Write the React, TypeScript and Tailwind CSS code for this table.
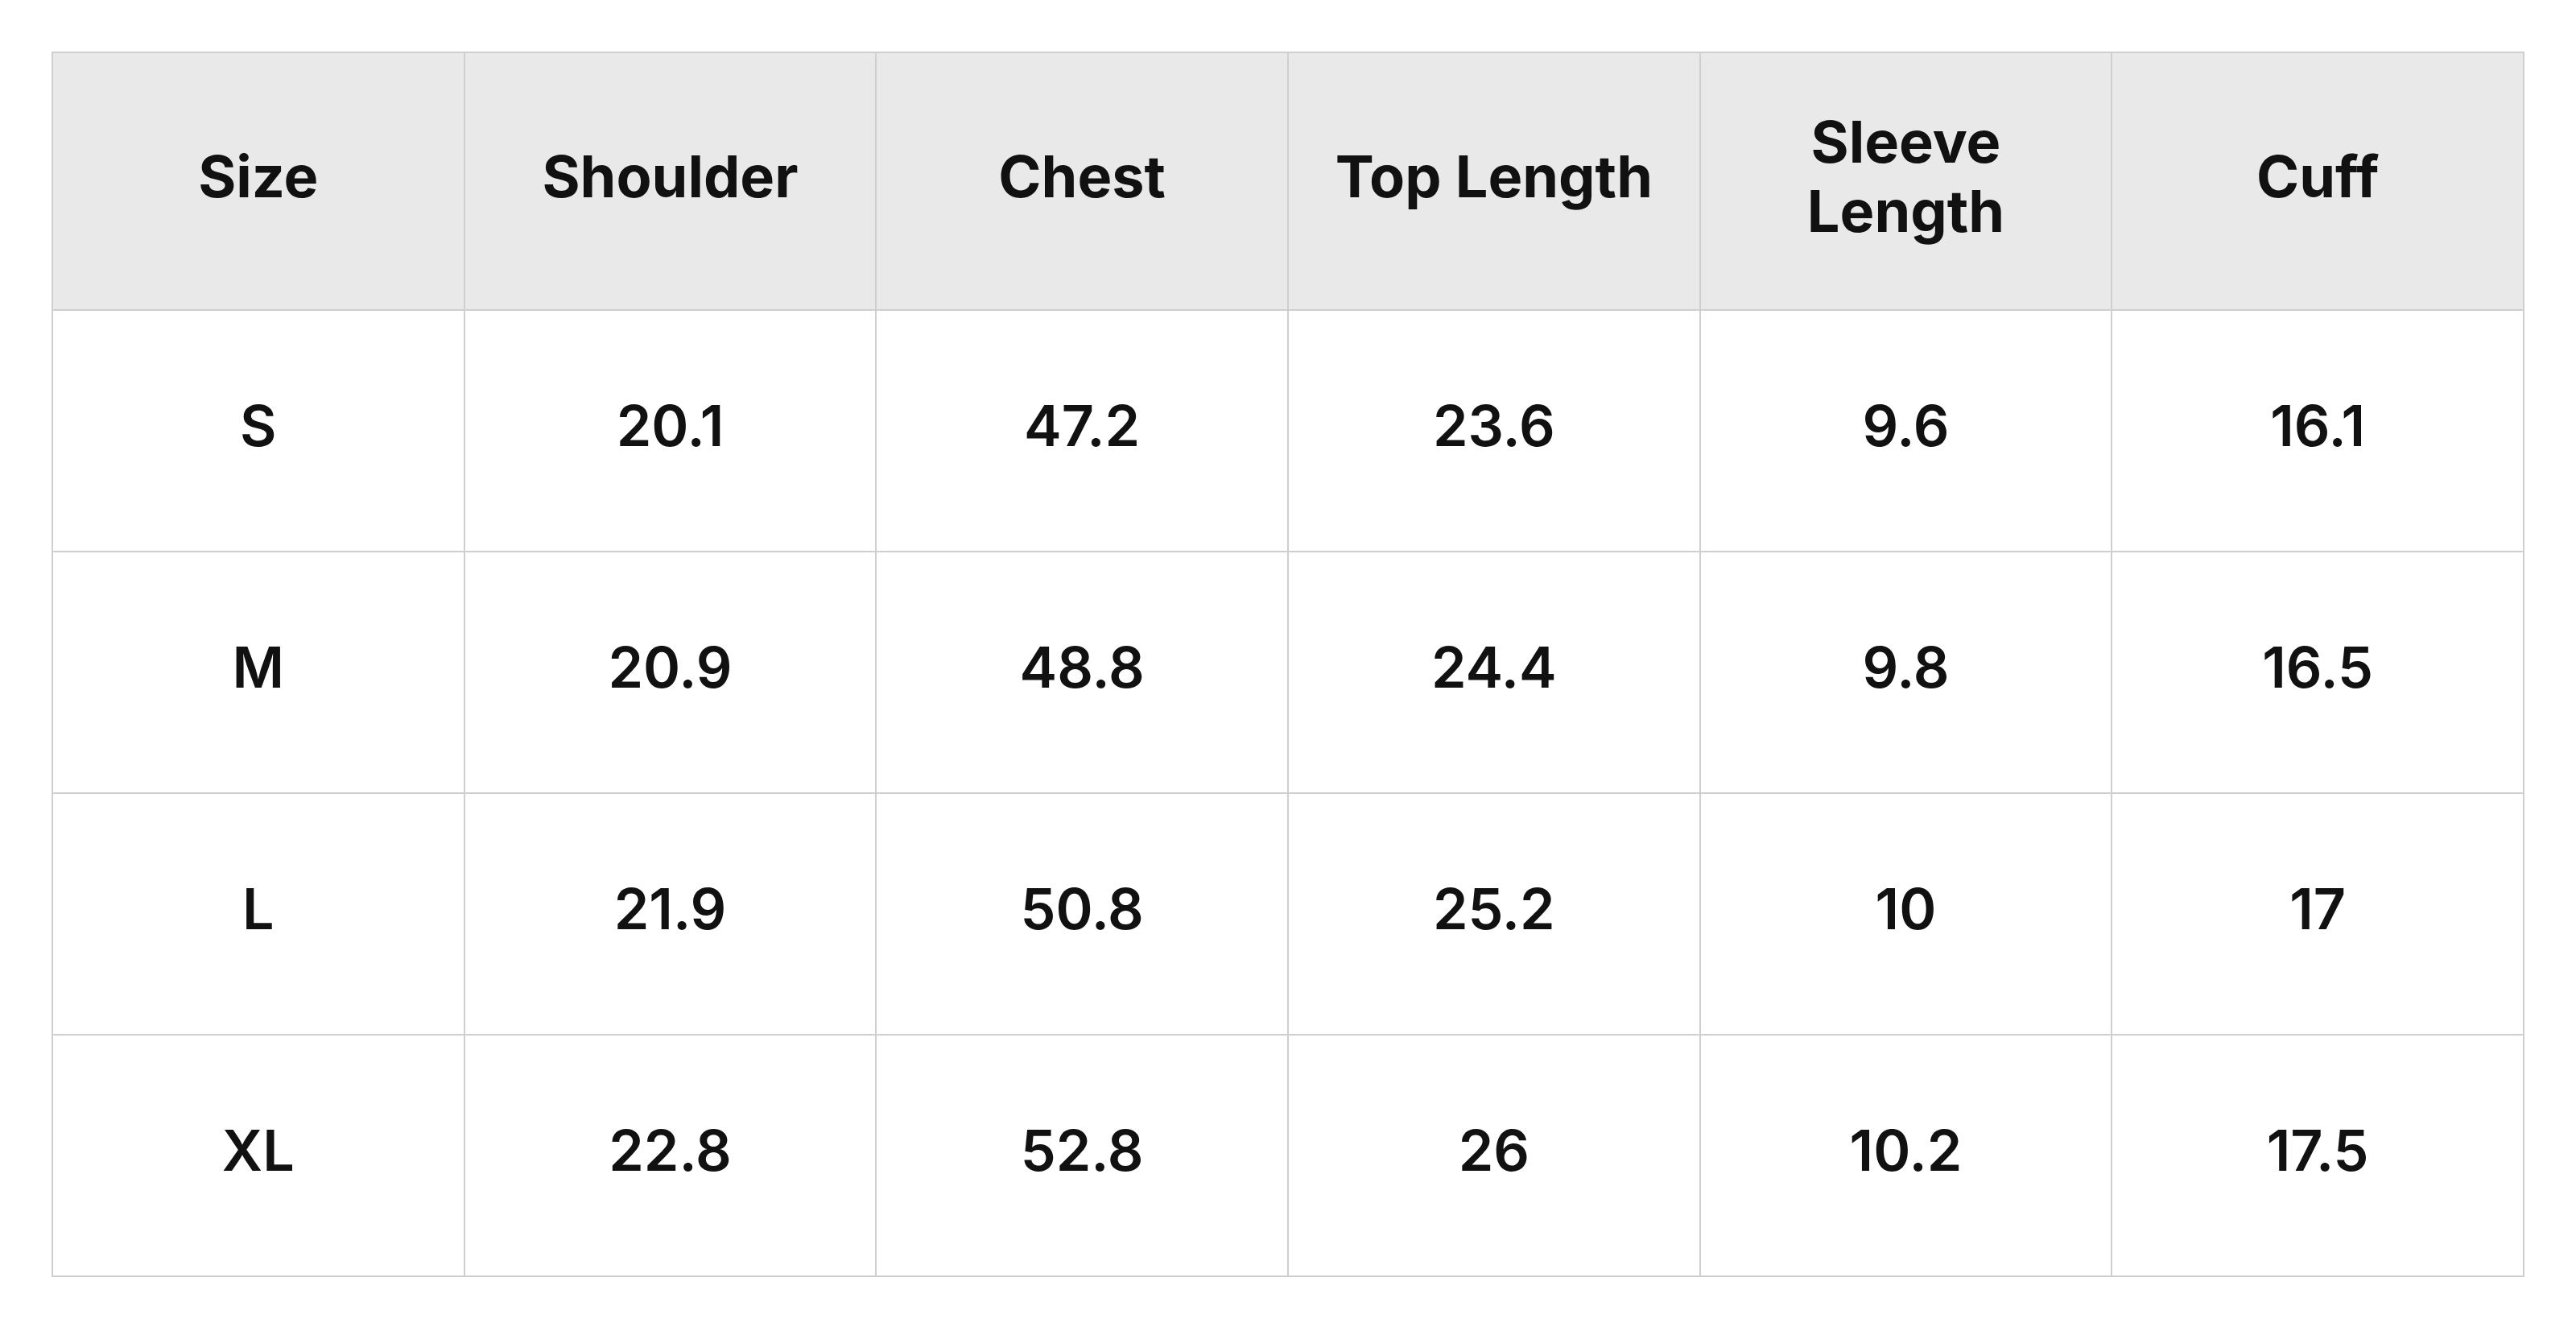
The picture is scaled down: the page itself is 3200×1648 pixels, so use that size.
const headers = ["Size", "Shoulder", "Chest", "Top Length", "Sleeve Length", "Cuff"];

const rows = [
  ["S", "20.1", "47.2", "23.6", "9.6", "16.1"],
  ["M", "20.9", "48.8", "24.4", "9.8", "16.5"],
  ["L", "21.9", "50.8", "25.2", "10", "17"],
  ["XL", "22.8", "52.8", "26", "10.2", "17.5"],
];

function App() {
  return (
    <div className="w-[3200px] h-[1648px] bg-white p-16 font-['Inter',sans-serif] text-[#111111]">
      <div className="grid grid-cols-6 border-l-2 border-t-2 border-[#cfcfcf]">
        {headers.map((h) => (
          <div
            key={h}
            className="h-[320px] flex items-center justify-center bg-[#e9e9e9] border-r-2 border-b-2 border-[#cfcfcf] pb-3"
          >
            <span className="max-w-[430px] text-center text-[72px] leading-[86px] font-bold">{h}</span>
          </div>
        ))}
        {rows.map((r) =>
          r.map((v, i) => (
            <div
              key={r[0] + i}
              className="h-[300px] flex items-center justify-center border-r-2 border-b-2 border-[#cfcfcf] pb-3 text-[70px] leading-[84px] font-semibold"
            >
              {v}
            </div>
          ))
        )}
      </div>
    </div>
  );
}

export default App;
